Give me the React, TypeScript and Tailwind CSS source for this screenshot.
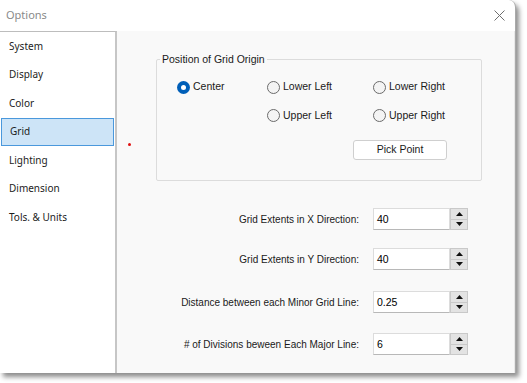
import React from 'react'

const sans = { fontFamily: '"Liberation Sans", Arial, sans-serif' }

const navItems = ['System', 'Display', 'Color', 'Grid', 'Lighting', 'Dimension', 'Tols. & Units']

const Radio = ({ label, checked, className = '' }: { label: string; checked?: boolean; className?: string }) => (
  <label className={`flex items-center gap-[3px] ${className}`}>
    {checked ? (
      <span className="w-[13px] h-[13px] rounded-full bg-[#005fb8] flex items-center justify-center">
        <span className="w-[5px] h-[5px] rounded-full bg-white" />
      </span>
    ) : (
      <span className="w-[13px] h-[13px] rounded-full border border-[#6b6b6b] bg-[#f4f4f4]" />
    )}
    <span className="text-[10.5px] text-[#1a1a1a]">{label}</span>
  </label>
)

const Spinner = ({ label, value, className = '' }: { label: string; value: string; className?: string }) => (
  <div className={`flex items-center ${className}`}>
    <div className="w-[256px] pr-[14px] text-right text-[10px] text-[#1a1a1a]">{label}</div>
    <div className="w-[77px] h-[22px] bg-white border border-[#dcdcdc] border-b-[#b8b8b8] pl-[3px] pt-[3px] text-[10.5px] text-black">
      {value}
    </div>
    <div className="w-[18px] h-[22px] flex flex-col border border-[#c9c9c9] bg-[#e3e3e3]">
      <div className="flex-1 flex items-center justify-center border-b border-[#c9c9c9]">
        <svg width="7" height="4" viewBox="0 0 7 4"><path d="M3.5 0L7 4H0z" fill="#111" /></svg>
      </div>
      <div className="flex-1 flex items-center justify-center">
        <svg width="7" height="4" viewBox="0 0 7 4"><path d="M0 0h7L3.5 4z" fill="#111" /></svg>
      </div>
    </div>
  </div>
)

export default function App() {
  return (
    <div className="w-[527px] h-[383px] bg-white">
      <div className="w-[516px] h-[373px] flex flex-col bg-white rounded-tr-[7px] border-r border-[#a9a9a9] shadow-[3px_4px_5px_rgba(0,0,0,0.45)]">
        {/* title bar */}
        <div className="h-[31px] flex items-center justify-between pl-[6px] pr-[10px]">
          <span className="text-[11px] text-[#8a8a8a]" style={{ fontFamily: '"Noto Sans", sans-serif' }}>Options</span>
          <svg width="11" height="11" viewBox="0 0 11 11" className="mb-[1px]">
            <path d="M0.5 0.5L10.5 10.5M10.5 0.5L0.5 10.5" stroke="#6e6e6e" strokeWidth="1" />
          </svg>
        </div>
        <div className="flex-1 flex min-h-0">
          {/* sidebar */}
          <ul className="w-[117px] border-t border-[#bdbdbd] border-r-2 border-r-[#c6c6c6] bg-white pl-[1px] pr-[1px]" style={{ fontFamily: '"Noto Sans", sans-serif' }}>
            {navItems.map((item) => (
              <li
                key={item}
                className={`h-[28.5px] flex items-center pl-[8px] text-[10px] text-[#1c1c1c] ${
                  item === 'Grid' ? 'bg-[#cde4f7] border border-[#4a98dc] pl-[7px]' : ''
                }`}
              >
                {item}
              </li>
            ))}
          </ul>
          {/* content */}
          <div className="relative flex-1 bg-[#f9f9f9] border-r border-[#e8e8e8] pt-[21px]" style={sans}>
            <span className="absolute left-[11px] top-[112px] w-[3px] h-[3px] rounded-full bg-[#e01010]" />
            <fieldset className="ml-[39px] w-[326px] h-[129px] border border-[#dcdcdc] rounded-[2px] pl-[20px]">
              <legend className="ml-[-17px] px-[2px] text-[10.5px] text-[#1a1a1a]">Position of Grid Origin</legend>
              <div className="grid grid-cols-[90px_106px_100px] gap-y-[12.5px] mt-[11.5px]">
                <Radio label="Center" checked />
                <Radio label="Lower Left" />
                <Radio label="Lower Right" />
                <span />
                <Radio label="Upper Left" />
                <Radio label="Upper Right" />
              </div>
              <button className="ml-[176px] mt-[17px] w-[94px] h-[20px] bg-white border border-[#cfcfcf] rounded-[3px] text-[10.5px] text-[#1a1a1a]">
                Pick Point
              </button>
            </fieldset>
            <Spinner label="Grid Extents in X Direction:" value="40" className="mt-[27px]" />
            <Spinner label="Grid Extents in Y Direction:" value="40" className="mt-[18px]" />
            <Spinner label="Distance between each Minor Grid Line:" value="0.25" className="mt-[21px]" />
            <Spinner label="# of Divisions beween Each Major Line:" value="6" className="mt-[20px]" />
          </div>
        </div>
      </div>
    </div>
  )
}
